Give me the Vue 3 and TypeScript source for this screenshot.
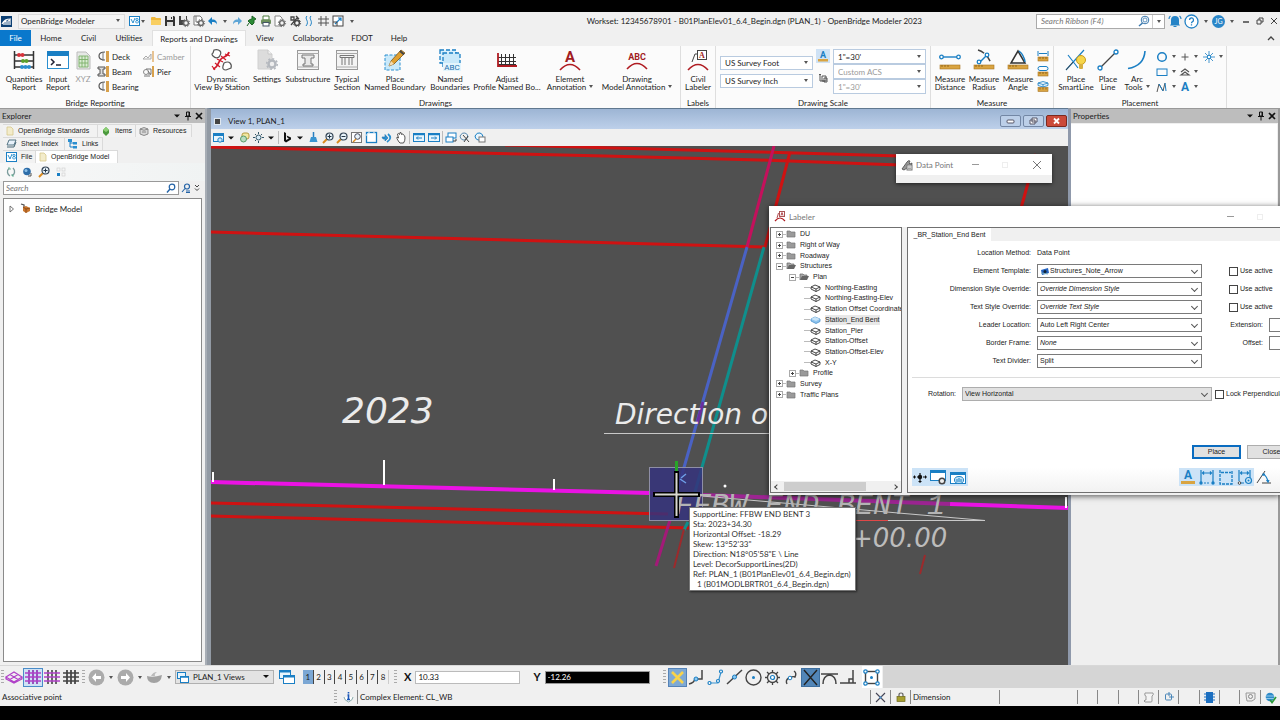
<script setup lang="ts">
import { h, ref } from 'vue'

type IconDef = [number, number, string]
const B = '#1a7fc4'
const ruler = (x: number, y: number, w: number) =>
  `<rect x="${x}" y="${y}" width="${w}" height="4" fill="#d9a441" stroke="#a87420" stroke-width=".6"/><path d="M${x + 2} ${y}v2M${x + 5} ${y}v2M${x + 8} ${y}v2" stroke="#7a5210" stroke-width=".7"/>`
const grid = (c: string, d: string) =>
  `<path d="M5 1v14M9 1v14M13 1v14" stroke="${c}" stroke-width="1.6"/><path d="M1 4h16M1 8h16M1 12h16" stroke="${d}" stroke-width="1.6"/>`
const gear = (x: number, y: number, c = '#666') =>
  `<circle cx="${x}" cy="${y}" r="2.4" fill="#f4f4f4" stroke="${c}" stroke-width="1.4"/><circle cx="${x}" cy="${y}" r="3.6" fill="none" stroke="${c}" stroke-width="1" stroke-dasharray="1.4 1.4"/>`
const lens = (s: string) =>
  `<path d="M1 11l4-4" stroke="#d98a1e" stroke-width="2"/><circle cx="7.500" cy="4.500" r="3.500" fill="#e8f3fa" stroke="#345" stroke-width="1.2"/><path d="${s}" stroke="#234" stroke-width="1"/>`

const ICONS: Record<string, IconDef> = {
  app: [11, 11, '<rect width="11" height="11" fill="#0c3f73"/><path d="M1 8c2-4 4-5 9-5M3 9V6l2-1v4M7 9V5l2-1v5" stroke="#fff" stroke-width="1.2" fill="none"/>'],
  v8: [11, 10, `<rect x=".5" y=".5" width="10" height="9" fill="#fff" stroke="${B}"/><path d="M2 3l2 4 2-5M8 4.500a1.100 1.100 0 1 0 0-2.200 1.100 1.100 0 1 0 0 2.200a1.300 1.300 0 1 0 .1 0" stroke="#2a8fd0" fill="none"/>`],
  folder: [12, 10, '<path d="M1 9V2q0-1 1-1h3l1 1h4q1 0 1 1v6z" fill="#f0b93c"/><path d="M1 9V4h10v5z" fill="#f9cf62"/>'],
  save: [12, 12, '<path d="M1 1h9l1 1v9H1z" fill="#333"/><rect x="3" y="1" width="6" height="4" fill="#e8e8e8"/><rect x="3" y="7" width="6" height="4" fill="#ddd"/><rect x="7" y="2" width="1" height="2" fill="#333"/>'],
  savegear: [12, 12, `<path d="M1 1h8v9H1z" fill="#444"/><rect x="3" y="1" width="5" height="4" fill="#e8e8e8"/>${gear(8, 8)}`],
  docgear: [12, 12, `<path d="M1 1h6l2 2v7H1z" fill="#fff" stroke="#777"/><path d="M3 1v6h4" stroke="#777" fill="none"/>${gear(8, 8)}`],
  pagegear: [12, 12, `<path d="M1 1h5l2 2v8H1z" fill="#fff" stroke="#888"/>${gear(8, 8)}`],
  undo: [11, 10, '<path d="M1 5l4-4v2.500c4 0 5 2 5 5c-1-2-2-2.500-5-2.500V9z" fill="#1a7fc4"/>'],
  redo: [11, 10, '<path d="M10 5L6 1v2.500c-4 0-5 2-5 5c1-2 2-2.500 5-2.500V9z" fill="#5ea5d6"/>'],
  pin: [11, 12, '<path d="M6 1l4 3-2 1v3L6 10 2 6l2-1.500 2-.5zM3 8l-2 3" fill="#2c8a35" stroke="#1f6426" stroke-width="1"/>'],
  print: [12, 12, '<path d="M3 1h6v4H3z" fill="#fff" stroke="#4a7a3c"/><rect x="1" y="4.500" width="10" height="4.500" rx="1" fill="#6d8f5c"/><rect x="3" y="7.500" width="6" height="3.500" fill="#fff" stroke="#456"/>'],
  tools: [12, 12, `<path d="M2 2h3v3H2zM7 1l3 3M2 10l7-8M6 6l5 0" stroke="#444" stroke-width="1.300" fill="none"/>${gear(8, 8, '#444')}`],
  waves: [10, 12, `<path d="M3 1c-3 3 3 5-1 10M7 1c-3 3 3 5-1 10" fill="none" stroke="${B}" stroke-width="1"/>`],
  hash: [11, 12, '<path d="M3 1v10M8 1v10M0 4h11M0 8h11" stroke="#555" stroke-width="1"/>'],
  scale: [12, 12, '<rect x="1" y="1" width="10" height="10" fill="#fff" stroke="#444"/><path d="M3 9l6-6M6 3h3v3" fill="none" stroke="#1a7fc4" stroke-width="1.200"/><path d="M1 7h4v4" fill="none" stroke="#444"/>'],
  bell: [14, 13, '<path d="M3 9V5a4 4 0 0 1 8 0v4l1 1.500H2z" fill="#2583c6"/><path d="M5.500 11.500h3M1 4q0-2 1.500-3M13 4q0-2-1.500-3" stroke="#2583c6" stroke-width="1.200" fill="none"/>'],
  help: [15, 15, '<circle cx="7.500" cy="7.500" r="6.500" fill="#fff" stroke="#2583c6" stroke-width="1.300"/><path d="M5.500 6a2 2 0 1 1 2.800 1.800q-.8.4-.8 1.400M7.500 10.300v1.200" stroke="#2583c6" stroke-width="1.300" fill="none"/>'],
  searchblue: [12, 12, `<circle cx="7" cy="5" r="3.800" fill="none" stroke="#3a78ad" stroke-width="1"/><circle cx="7" cy="5" r="2" fill="none" stroke="#3a78ad" stroke-width=".8"/><path d="M4.500 8L1 11" stroke="#3a78ad" stroke-width="1.500"/>`],
  search: [10, 10, `<circle cx="6" cy="4" r="2.800" fill="none" stroke="#2463a6" stroke-width="1.200"/><path d="M4 6L1 9.500" stroke="#2463a6" stroke-width="1.400"/>`],
  search2: [10, 10, `<circle cx="6" cy="3.500" r="2.500" fill="none" stroke="#2463a6" stroke-width="1.200"/><path d="M4 5.500L1 9M5 8h4M5 9.500h4" stroke="#2463a6" stroke-width="1.100"/>`],
  min: [8, 8, '<path d="M1 5h6" stroke="#444" stroke-width="1.500"/>'],
  restore: [8, 8, '<path d="M1 3h4v4H1zM3 3V1h4v4H5" fill="none" stroke="#444"/>'],
  close: [8, 8, '<path d="M1 1l6 6M7 1L1 7" stroke="#444" stroke-width="1"/>'],
  closed: [8, 8, '<path d="M0 0l8 8M8 0L0 8" stroke="#777" stroke-width="1"/>'],
  up: [8, 6, '<path d="M1 5l3-3 3 3" fill="none" stroke="#444" stroke-width="1.300"/>'],
  abacus: [22, 20, '<path d="M1.500 1v18M20.500 1v18M1 5h20M1 11h20M1 17h20" stroke="#333" stroke-width="1.500"/><g fill="#d8323a"><circle cx="6" cy="5" r="2"/><circle cx="9.500" cy="5" r="2"/></g><g fill="#5aa02c"><circle cx="10" cy="11" r="2"/><circle cx="13.500" cy="11" r="2"/></g><g fill="#2a8fd0"><circle cx="9" cy="17" r="2"/><circle cx="12.500" cy="17" r="2"/><circle cx="16" cy="17" r="2"/></g>'],
  terminal: [22, 18, '<rect x=".5" y=".5" width="21" height="17" fill="#fff" stroke="#2a8fd0"/><rect width="22" height="5" fill="#1a7fc4"/><path d="M4 8l3 3-3 3M9 14h5" fill="none" stroke="#223" stroke-width="1.500"/>'],
  xyz: [15, 19, '<path d="M1 1h9l4 4v13H1z" fill="#e6e8e6" stroke="#bbb"/><rect x="3" y="5" width="9" height="11" fill="#d9ecd2"/><path d="M3 5h9v11H3zM6 5v11M9 5v11M3 8.500h9M3 12h9" fill="none" stroke="#7cb069" stroke-width=".9"/>'],
  deck: [12, 11, '<path d="M7 1Q1 1 1 5t6 4" fill="none" stroke="#555" stroke-width="1.200"/><rect x="8" y="0" width="3" height="11" fill="#d8a14c"/><path d="M5 1v9" stroke="#777"/>'],
  beam: [12, 11, '<path d="M0 1h7v2H5v5h2v2H0V8h2V3H0z" fill="#ddd" stroke="#555" stroke-width="1"/><rect x="8" y="0" width="3" height="11" fill="#d8a14c"/>'],
  camber: [12, 11, '<path d="M0 8l3-3 2 2 3-4v5z" fill="none" stroke="#aaa"/><path d="M10 0v11" stroke="#e0b070" stroke-width="1.500"/>'],
  pier: [12, 11, '<circle cx="3" cy="6" r="2.500" fill="none" stroke="#888"/><path d="M3 3h5v5H5M1 10h6M5 5l3 4" stroke="#777" fill="none"/><path d="M10 0v11" stroke="#d8a14c" stroke-width="2"/>'],
  dynamic: [22, 22, '<path d="M3 1q4-1 6 1t-1 6q-3 2-6-1-2-2 0-3zM13 14q4-2 6 0t1 5l-5 2q-4 0-3-4z" fill="#fff" stroke="#555" stroke-width="1.200"/><path d="M2 20c5-1 5-7 8-10s7-2 8-7" fill="none" stroke="#d01a2a" stroke-width="1.700"/><path d="M1 17l3 4M4 14l5 4M6 10l6 3M10 7l5 4M14 5l5 2" stroke="#d01a2a" stroke-width="1.200"/>'],
  settings: [21, 22, `<path d="M1 1h10l4 4v15H1z" fill="#dcdcdc" stroke="#d0d0d0"/><path d="M11 1v4h4" fill="#f4f4f4" stroke="#c8c8c8"/><circle cx="15" cy="15" r="3.500" fill="#eee" stroke="#b4b8be" stroke-width="2.500"/><circle cx="15" cy="15" r="5.300" fill="none" stroke="#b4b8be" stroke-width="1.500" stroke-dasharray="2 2.100"/>`],
  substr: [22, 20, '<rect x=".5" y=".5" width="21" height="19" fill="#f4f4f4" stroke="#999"/><path d="M0 3.500h22M0 17h22" stroke="#aaa"/><path d="M5 5h12v3h-3v6h2v2H6v-2h2V8H5z" fill="#e8e8e8" stroke="#777"/>'],
  typical: [22, 20, '<rect x=".5" y=".5" width="21" height="19" fill="#f4f4f4" stroke="#999"/><path d="M0 3.500h22M0 17h22" stroke="#aaa"/><path d="M4 5.500h14v2H4zM6 8v7M9 8v7M13 8v7M16 8v7" fill="none" stroke="#777"/>'],
  place: [22, 22, '<rect x="1" y="6" width="15" height="15" fill="#c9e9fa" stroke="#2a8fd0" stroke-dasharray="3 1.500"/><path d="M5 17l2-5L17 1l4 3L10 15z" fill="#e0a030" stroke="#7a5418" stroke-width=".8"/><path d="M5 17l2-5 3 3z" fill="#f4dcb0"/><path d="M16 2l4 3.500" stroke="#444" stroke-width="2"/>'],
  named: [22, 22, '<rect x="1" y="1" width="16" height="13" fill="#d8f0fc" stroke="#1a7fc4" stroke-width="1.300" stroke-dasharray="4 2"/><rect x="4" y="4" width="17" height="14" fill="#c9e9fa" stroke="#1a7fc4" stroke-width="1.300" stroke-dasharray="4 2"/><rect x="4" y="14" width="18" height="8" fill="#e4f5fd"/><text x="13" y="21" text-anchor="middle" font-size="8" font-family="Roboto, sans-serif" fill="#1a6fae">ABC</text>'],
  adjust: [20, 14, '<path d="M4.500 1v12M8.500 1v12M12.500 1v12M16.500 1v12M1 4.500h18M1 8.500h18M1 11.500h18" stroke="#333" stroke-width="1"/><path d="M1 0v13h19" fill="none" stroke="#b01c22" stroke-width="1.800"/>'],
  annA: [22, 21, '<text x="11" y="12" text-anchor="middle" font-size="15" font-weight="700" font-family="Roboto, sans-serif" fill="#a11c22">A</text><path d="M1 20q10-11 20 0" fill="none" stroke="#b01c22" stroke-width="1.600"/>'],
  annABC: [22, 19, '<text x="11" y="9" text-anchor="middle" font-size="9" font-weight="700" font-family="Roboto, sans-serif" fill="#a11c22">ABC</text><path d="M1 18q10-11 20 0" fill="none" stroke="#b01c22" stroke-width="1.600"/>'],
  civil: [22, 21, '<path d="M1 20q10-11 20 0" fill="none" stroke="#b01c22" stroke-width="1.600"/><path d="M5 12l3-8h3" fill="none" stroke="#444"/><rect x="10.500" y=".5" width="9" height="9" fill="#fff" stroke="#444"/><text x="15" y="8" text-anchor="middle" font-size="8" font-weight="700" font-family="Liberation Serif, serif" fill="#a11c22">A</text>'],
  annscale: [14, 14, `<rect width="14" height="14" fill="#cfe2f5"/><text x="7" y="9" text-anchor="middle" font-size="9" font-weight="700" font-family="Roboto, sans-serif" fill="${B}">A</text><rect x="2" y="10" width="10" height="2.500" fill="#d9a441"/>`],
  acs: [10, 10, '<path d="M2 8V1M1 2l1-1 1 1M2 8h5M4 3h4v5H4zM6 5h3v4H6z" fill="none" stroke="#555"/>'],
  mdist: [22, 22, `<path d="M3 8h16" stroke="${B}" stroke-width="1.400"/><g fill="#fff" stroke="${B}" stroke-width="1.300"><circle cx="2.500" cy="8" r="1.800"/><circle cx="19.500" cy="8" r="1.800"/></g>${ruler(1, 16, 20)}`],
  mrad: [22, 22, `<path d="M5 1q8 2 13 13" fill="none" stroke="#444" stroke-width="1.500" stroke-dasharray="7 3"/><path d="M7 13l7-7" stroke="${B}" stroke-width="1.400"/><g fill="#fff" stroke="${B}" stroke-width="1.300"><circle cx="6" cy="13" r="1.800"/><circle cx="14" cy="6" r="1.800"/></g>${ruler(1, 16, 20)}`],
  mang: [22, 22, `<path d="M11 2L4 14h14z" fill="none" stroke="#333" stroke-width="1.500"/><path d="M12 2q5 4 6 11" fill="none" stroke="${B}" stroke-width="1.500"/>${ruler(1, 16, 20)}`],
  mlen: [12, 11, `<path d="M1 0v5M11 0v5M2 2.500h8" stroke="${B}"/>${ruler(1, 6, 10)}`],
  marea: [12, 11, `<rect x="1" y=".5" width="10" height="4" rx="2" fill="none" stroke="${B}"/>${ruler(1, 6, 10)}`],
  mvol: [12, 11, `<path d="M1 2l5-1.500L11 2v2.500L6 6 1 4.500zM1 2l5 1.500L11 2M6 3.500V6" fill="#e0f2fc" stroke="${B}" stroke-width=".8"/>${ruler(1, 6.5, 10)}`],
  smart: [22, 22, `<path d="M1 21L19 1M3 6l10 13" stroke="${B}" stroke-width="1.200"/><path d="M1 21l7-8" stroke="#444"/><circle cx="16" cy="11" r="4.500" fill="#f7d64a" stroke="#c79c1e"/><rect x="14" y="15" width="4" height="5" rx="1" fill="#d8b040"/>`],
  line: [22, 22, `<path d="M3 19L19 3" stroke="#444" stroke-width="1.300"/><g fill="#fff" stroke="${B}" stroke-width="1.300"><circle cx="3" cy="19" r="2"/><circle cx="19" cy="3" r="2"/></g>`],
  arc: [20, 20, `<path d="M1 18.500Q17 16 18 1" fill="none" stroke="${B}" stroke-width="1.600"/>`],
  circle: [12, 12, `<circle cx="6" cy="6" r="4.300" fill="none" stroke="${B}" stroke-width="1.500"/>`],
  rect: [12, 12, `<rect x="1" y="3" width="10" height="6.500" fill="none" stroke="${B}"/>`],
  poly: [12, 12, `<path d="M1 11L3 3l4 7 2-8" fill="none" stroke="#555"/><path d="M3 3l4 7M9 2l1 8" stroke="${B}"/>`],
  plus: [10, 10, '<path d="M5 1.500v7M1.500 5h7" stroke="#555"/>'],
  chev: [10, 10, '<path d="M1 5l4-3 4 3M1 8l4-3 4 3z" fill="none" stroke="#555" stroke-width="1.200"/>'],
  A: [10, 10, `<text x="5" y="9" text-anchor="middle" font-size="12" font-weight="700" font-family="Roboto, sans-serif" fill="${B}">A</text>`],
  star: [12, 12, `<path d="M6 0v12M0 6h12M2 2l8 8M10 2l-8 8" stroke="${B}" stroke-width=".8"/><circle cx="6" cy="6" r="1.800" fill="#fff" stroke="${B}"/>`],
  bridge: [8, 10, '<path d="M1 1h4l2 2v6H1z" fill="#f3eccb" stroke="#d6c88a" stroke-width=".8"/>'],
  items: [10, 11, '<path d="M5 1l3 3v3L5 10 2 7V4z" fill="#4c9a3e"/><path d="M5 1l3 3-3 2-3-2z" fill="#8ccf74"/>'],
  db: [10, 11, '<path d="M1 3q4-3 8 0v5q-4 3-8 0z" fill="#d8d8d8" stroke="#777" stroke-width=".8"/><path d="M1 3q4 2.500 8 0M3 6h4" fill="none" stroke="#777" stroke-width=".8"/>'],
  sheet: [11, 10, '<path d="M3 1h7L8 6H1z" fill="#e8f2fb" stroke="#467" stroke-width=".9"/><path d="M1 8h7l2-5" fill="none" stroke="#467"/>'],
  links: [10, 10, `<path d="M2 1v7h4M2 4h4" fill="none" stroke="${B}"/><rect x="0" y="0" width="4" height="3" fill="#2a8fd0"/><rect x="5" y="3" width="4" height="2.500" fill="#2a8fd0"/><rect x="5" y="7" width="4" height="2.500" fill="#2a8fd0"/>`],
  refresh: [10, 10, '<path d="M3 1.500Q1 3 1.500 5.500T4 9M7 1Q9 3 8.500 5.500T6 8.500" fill="none" stroke="#7b9c9c" stroke-width="1.300"/><path d="M2 1h2v2M8 9H6V7" fill="none" stroke="#5a8" stroke-width=".8"/>'],
  sphere: [10, 10, '<circle cx="5" cy="4.500" r="3.800" fill="#2e6da8"/><circle cx="4" cy="3.500" r="1.500" fill="#8cc0e8"/><path d="M6 9h3V6" stroke="#555" fill="none"/>'],
  zoomp: [12, 12, lens('M5.500 4.500h4M7.500 2.500v4')],
  zoomm: [12, 12, lens('M5.500 4.500h4')],
  dots: [10, 10, `<rect x="1" y="1" width="3" height="3" fill="none" stroke="#ccc" stroke-width=".6"/><rect x="6" y="1" width="3" height="3" fill="none" stroke="#ccc" stroke-width=".6"/><rect x="1" y="6" width="3" height="3" fill="${B}"/><rect x="6" y="6" width="3" height="3" fill="none" stroke="#ccc" stroke-width=".6"/>`],
  dchev: [8, 8, '<path d="M2 1l2 2 2-2M2 4.500l2 2 2-2" fill="none" stroke="#444"/>'],
  twist: [8, 8, '<path d="M2 1l3.500 3L2 7z" fill="#fff" stroke="#666" stroke-width=".9"/>'],
  bmodel: [11, 11, '<path d="M1 1l3 1v3" fill="none" stroke="#555" stroke-width="1.300"/><path d="M3 4l3-1 4 2v3L6 10 3 8z" fill="#c9762e"/><path d="M3 4l3 2 4-1M6 6v4" stroke="#7a3e10" stroke-width=".7" fill="none"/>'],
  pinv: [8, 10, '<path d="M2.500 1h3v4h-3zM1 5.500h6M4 6v3.500M5 1v4" fill="none" stroke="#111" stroke-width="1"/>'],
  xb: [8, 8, '<path d="M1 1l6 6M7 1L1 7" stroke="#111" stroke-width="1.700"/>'],
  tri: [8, 6, '<path d="M1 1.500h6L4 4.500z" fill="#111"/>'],
  vattr: [11, 10, `<rect x=".5" y=".5" width="10" height="8" fill="#e8f5fd" stroke="${B}"/><rect width="11" height="3" fill="${B}"/><circle cx="7" cy="7" r="2.200" fill="#cdeafa" stroke="${B}"/>`],
  style: [11, 11, '<rect x="3" y="1" width="7" height="6" rx="2" fill="#f3e7a0" stroke="#b49a40"/><circle cx="4.500" cy="7" r="3" fill="#b8dcc0" stroke="#5a9a6a"/>'],
  bright: [11, 11, '<circle cx="5.500" cy="5.500" r="2.500" fill="#d8ecf8" stroke="#356"/><path d="M5.500 0v2M5.500 9v2M0 5.500h2M9 5.500h2M2 2l1 1M9 2l-1 1M2 9l1-1" stroke="#356"/>'],
  bing: [9, 11, '<path d="M1 0l2 1v7l3-1.500-1.500-.8L3.500 3.500 8 5.500v2L3 10.500 1 9z" fill="#111"/>'],
  brush: [9, 11, '<path d="M4.500 0v5" stroke="#2a7fc0" stroke-width="1.500"/><path d="M2 5h5l1.500 5h-8z" fill="#3a94d0"/>'],
  window: [11, 11, '<rect x=".5" y=".5" width="10" height="10" fill="#fff" stroke="#777"/><circle cx="6.500" cy="4.500" r="2.800" fill="#e8f3fa" stroke="#445"/><path d="M5 7l-3 3" stroke="#d98a1e" stroke-width="1.500"/>'],
  fit: [11, 11, `<rect x=".5" y=".5" width="10" height="10" fill="#fff" stroke="${B}" stroke-width="1.300"/><path d="M0 3h1M3 0v1M8 0v1" stroke="#fff"/>`],
  rotate: [11, 10, '<path d="M1 4h3V1.500L7 5 4 8V6H2z" fill="#2a8fd0" stroke="#1a6fae" stroke-width=".6"/><path d="M7 1q5 4-1 8" fill="none" stroke="#2a8fd0" stroke-width="1.800"/>'],
  pan: [10, 12, '<path d="M3 10Q0 6 1 5l1.500 1L1.500 2q1-1.500 2 .5l.5-2q1.500-.5 1.500 2Q7 1 7.500 3 9 3 9 6T7.500 11H4z" fill="#fff" stroke="#444" stroke-width=".9"/>'],
  prev: [12, 9, `<rect x=".5" y=".5" width="11" height="8" fill="#e8f5fd" stroke="${B}"/><path d="M0 1.500h12" stroke="${B}" stroke-width="1.500"/><path d="M9 5H3.500M5 3.500L3.500 5 5 6.500" stroke="${B}" fill="none"/>`],
  next: [12, 9, `<rect x=".5" y=".5" width="11" height="8" fill="#e8f5fd" stroke="${B}"/><path d="M0 1.500h12" stroke="${B}" stroke-width="1.500"/><path d="M3 5h5.500M7 3.500L8.500 5 7 6.500" stroke="${B}" fill="none"/>`],
  copyv: [12, 11, `<rect x="3" y="1" width="8" height="5" fill="#fff" stroke="${B}"/><rect x="1" y="5" width="7" height="5" fill="#fff" stroke="${B}"/><path d="M8 9h3V7" stroke="#444" fill="none"/>`],
  clipv: [12, 11, `<path d="M1 4q2-4 5-3t3 4q-2 4-5 3t-3-4z" fill="none" stroke="#5a8ab0"/><path d="M4 3l6 7M9 4l-4 6" stroke="#444"/>`],
  maskv: [12, 11, `<path d="M1 4q2-4 5-3t3 4q-2 4-5 3t-3-4z" fill="#e8f5fd" stroke="${B}"/><rect x="5" y="5" width="6" height="5" fill="#fff" stroke="#777"/>`],
  wmin: [21, 12, '<rect x=".5" y=".5" width="20" height="11" rx="1.500" fill="#bccfe8" stroke="#7387a5"/><rect x="7" y="5" width="7" height="3" rx="1" fill="#fff" stroke="#556"/>'],
  wres: [21, 12, '<rect x=".5" y=".5" width="20" height="11" rx="1.500" fill="#bccfe8" stroke="#7387a5"/><path d="M9 3h5v4H9zM7 5h5v4H7z" fill="#fff" stroke="#556"/>'],
  wclose: [21, 12, '<rect x=".5" y=".5" width="20" height="11" rx="1.500" fill="#cb4a3a" stroke="#7c2a20"/><path d="M8 3.500l5 5M13 3.500l-5 5" stroke="#fff" stroke-width="1.800"/>'],
  wrench: [12, 12, '<path d="M1 10L6 3q1-2 3-1L8 4l1 1 2-1q0 3-2 3L3 11z" fill="#999" stroke="#555" stroke-width=".9"/><rect x="6" y="6" width="5" height="5" fill="#eee" stroke="#777"/><path d="M7 8h3M7 9.500h3" stroke="#777" stroke-width=".6"/>'],
  lab: [12, 11, '<path d="M1 10q5-6 10 0" fill="none" stroke="#b01c22" stroke-width="1.200"/><rect x="5.500" y=".5" width="5" height="5" fill="#fff" stroke="#a55"/><path d="M7 4.500l1-3 1 3M3 7l1.500-5" stroke="#a11c22" fill="none" stroke-width=".8"/>'],
  fold: [10, 8, '<path d="M1 1h3l1 1h4v5H1z" fill="#9a9a9a" stroke="#777" stroke-width=".7"/>'],
  foldo: [10, 8, '<path d="M1 7V1h3l1 1h3v1.500" fill="#aaa" stroke="#666" stroke-width=".7"/><path d="M1 7l2-4h7L8 7z" fill="#666"/>'],
  tag: [11, 8, '<path d="M1 3l4-2 5 2-4 2zM1 3v2l5 2.500V5M6 7.500l4-2V3" fill="#fff" stroke="#333" stroke-width=".9"/>'],
  tagb: [11, 8, '<path d="M1 3l4-2 5 2v2.500l-4 2-5-2.500z" fill="#8ec4ee" stroke="#4a90cc" stroke-width=".8"/><path d="M1 3l4-2 5 2-4 2z" fill="#c8e4f8"/>'],
  tmpl: [10, 9, '<path d="M1 3l7-2 1 5-7 2z" fill="#2463c0"/><circle cx="5" cy="4.500" r="1.500" fill="#123"/><path d="M1 6l7 1" stroke="#7ab" />'],
  move: [14, 12, '<path d="M1 6h12M7 2v8" stroke="#111" stroke-width="1.200" stroke-dasharray="2 1"/><circle cx="7" cy="6" r="2.200" fill="#111"/><path d="M0 6l2-2v4zM14 6l-2-2v4zM7 12L5 10h4z" fill="#111"/>'],
  wgear: [17, 15, `<rect x=".5" y=".5" width="15" height="10" fill="#fff" stroke="${B}"/><rect width="16" height="3" fill="${B}"/><circle cx="12" cy="11" r="2.800" fill="#eee" stroke="#444" stroke-width="1.500"/>`],
  wpin: [17, 15, `<rect x=".5" y="2.500" width="15" height="11" fill="#fff" stroke="${B}"/><rect y="2" width="16" height="3" fill="${B}"/><ellipse cx="9" cy="10" rx="4.500" ry="3.500" fill="#bfe3f7" stroke="${B}"/><path d="M9 8v4M7 9v3M11 9v3" stroke="${B}"/>`],
  anR: [16, 16, `<text x="8" y="10" text-anchor="middle" font-size="12" font-weight="700" font-family="Roboto, sans-serif" fill="${B}">A</text><rect x="1" y="12" width="14" height="3" fill="#d9a441"/>`],
  dimA: [16, 16, `<path d="M2 1v13M14 1v13M3 4h10M5 2.500L3.500 4 5 5.500M11 2.500L12.500 4 11 5.500" stroke="${B}" fill="none" stroke-width="1.200"/><circle cx="2" cy="14" r="1.700" fill="${B}"/><circle cx="14" cy="14" r="1.700" fill="${B}"/><path d="M5 14h6" stroke="${B}" stroke-dasharray="2 1"/>`],
  dimB: [16, 16, `<path d="M2 1v14h12V1M3 3.500h10" stroke="${B}" fill="none" stroke-width="1.300" stroke-dasharray="3 1"/>`],
  dimC: [16, 16, `<path d="M2 1v11M13 1v8M3 4h9M5 2.500L3.500 4 5 5.500M10 2.500L11.500 4 10 5.500M4 14h3" stroke="${B}" fill="none" stroke-width="1.200"/><circle cx="2.500" cy="14" r="1.300" fill="#fff" stroke="#444"/><circle cx="11.500" cy="11.500" r="3" fill="#cfe8f8" stroke="${B}" stroke-width="1.200"/><circle cx="11.500" cy="11.500" r="1" fill="${B}"/>`],
  ang: [16, 16, `<path d="M1 14L9 2M6 14h9" stroke="#444"/><path d="M7 5q4 2 5 8M10.500 11l1.500 2 1-2M9 5H7v2" stroke="${B}" fill="none" stroke-width="1.200"/>`],
  mesh: [18, 16, '<path d="M1 8l8-5 8 5-8 5zM5 5.500l8 5M5 10.500l8-5M1 8v2l8 4 8-4V8" fill="none" stroke="#b040c8" stroke-width="1.200"/>'],
  gridP: [18, 16, grid('#8a2fb0', '#b040c8')],
  gridM: [18, 16, grid('#444', '#b040c8')],
  gridK: [18, 16, grid('#333', '#444')],
  back: [17, 17, '<circle cx="8.500" cy="8.500" r="8" fill="#ababab"/><path d="M8 4L4 8.500 8 13v-3h5V7H8z" fill="#fff"/>'],
  fwd: [17, 17, '<circle cx="8.500" cy="8.500" r="8" fill="#ababab"/><path d="M9 4l4 4.500L9 13v-3H4V7h5z" fill="#fff"/>'],
  boat: [17, 13, '<path d="M1 5q6 2 15-1-1 8-8 8T1 5z" fill="#a2a2a2"/><path d="M5 5q2-4 6-4-3 2-2 4z" fill="#bbb"/>'],
  views: [12, 11, `<rect x=".5" y=".5" width="8" height="6" fill="#e8f5fd" stroke="${B}"/><rect x="3.500" y="4.500" width="8" height="6" fill="#fff" stroke="${B}"/><path d="M3 5h9" stroke="${B}" stroke-width="1.500"/>`],
  views2: [17, 15, `<rect x=".5" y=".5" width="11" height="8" fill="#e8f5fd" stroke="${B}"/><path d="M0 1.500h12" stroke="${B}" stroke-width="2"/><rect x="4.500" y="5.500" width="11" height="8" fill="#fff" stroke="${B}"/><path d="M4 6.500h12" stroke="${B}" stroke-width="2"/>`],
  snapx: [19, 19, '<rect x=".5" y=".5" width="18" height="18" fill="#7ea9d4" stroke="#5583b8"/><path d="M4 4l11 11M15 4L4 15" stroke="#f8d34a" stroke-width="2.600"/>'],
  s1: [17, 17, `<path d="M1 15q5-1 6-5h7V1" fill="none" stroke="#444" stroke-width="1.500"/><circle cx="8" cy="10" r="2" fill="#8cc8f0" stroke="${B}"/>`],
  s2: [17, 17, `<path d="M3 14h8l3-11" fill="none" stroke="#3a94d0" stroke-width="1.200"/><g fill="#fff" stroke="${B}" stroke-width="1.200"><circle cx="2.500" cy="14" r="1.500"/><circle cx="11" cy="12" r="1.500"/><circle cx="14" cy="2.500" r="1.500"/></g>`],
  s3: [17, 17, `<path d="M1 15L16 1" stroke="#444" stroke-width="1.500"/><circle cx="8.500" cy="8" r="2" fill="#8cc8f0" stroke="${B}"/>`],
  s4: [17, 17, `<circle cx="8.500" cy="8.500" r="7.500" fill="none" stroke="#444" stroke-width="1.400"/><circle cx="8.500" cy="8.500" r="1.500" fill="${B}"/>`],
  s5: [17, 17, `<circle cx="8.500" cy="8.500" r="5" fill="none" stroke="#444" stroke-width="1.300"/><path d="M8.500 1v3M8.500 13v3M1 8.500h3M13 8.500h3M3 3l2 2M14 3l-2 2M3 14l2-2M14 14l-2-2" stroke="#444" stroke-width="1.300"/><circle cx="8.500" cy="8.500" r="2" fill="#fff" stroke="${B}" stroke-width="1.200"/>`],
  s6: [17, 17, `<path d="M4 15q-2-4 2-6t6-1q2-4-1-6" fill="none" stroke="#444" stroke-width="1.400"/><circle cx="7" cy="9" r="1.800" fill="#fff" stroke="${B}"/>`],
  s7: [19, 19, '<rect x=".5" y=".5" width="18" height="18" fill="#5286b8" stroke="#3e6f9f"/><path d="M3 2l13 15M16 2L3 17" stroke="#222" stroke-width="1.400"/>'],
  s8: [17, 17, '<path d="M0 5h17M2 15q0-8 6.500-9Q15 7 15 15" fill="none" stroke="#444" stroke-width="1.500"/>'],
  s9: [17, 17, '<path d="M0 14h16M13 1v13M9 14v-4h4" fill="none" stroke="#444" stroke-width="1.500"/>'],
  s10: [17, 17, `<rect x="2.500" y="2.500" width="12" height="12" fill="none" stroke="#444" stroke-width="1.400"/><g fill="#fff" stroke="${B}" stroke-width="1.200"><circle cx="2.500" cy="2.500" r="1.700"/><circle cx="14.500" cy="2.500" r="1.700"/><circle cx="2.500" cy="14.500" r="1.700"/><circle cx="14.500" cy="14.500" r="1.700"/></g><circle cx="8.500" cy="8.500" r="1.500" fill="${B}"/>`],
  info: [11, 12, '<path d="M1 6q0 3 4.500 5Q10 9 10 6" fill="#fff" stroke="#8aa"/><path d="M5.500 1v1.500M4.500 4h1v4.500M4 8.500h3" stroke="#1a56b8" stroke-width="1.600" fill="none"/>'],
  stx: [11, 11, '<path d="M1 1l9 9M10 1L1 10" stroke="#445" stroke-width="1.100"/><circle cx="5.500" cy="5.500" r="1.300" fill="#5a94c8"/>'],
  lock: [10, 10, '<path d="M3 5V3q0-2 2-2t2 2v2" fill="none" stroke="#666" stroke-width="1.200"/><rect x="1" y="4.500" width="8" height="5" fill="#a8a030" stroke="#6e681c" stroke-width=".7"/>'],
  scroll: [12, 11, '<path d="M2 1h8q1 2-1 3v5q0 1-1 1H2q-2-1 0-2h1V4Q1 4 2 1z" fill="#f4f4f4" stroke="#999"/>'],
  boxp: [10, 10, '<rect x="1.500" y="2" width="6" height="6" rx="1" fill="none" stroke="#4a86b8"/><path d="M5 0v4M5 5h5" stroke="#4a86b8"/>'],
  chip: [11, 11, '<rect x="2" y="0" width="7" height="11" fill="#1c6fc0"/><path d="M0 2h2M0 5h2M0 8h2M9 2h2M9 5h2M9 8h2" stroke="#1c6fc0"/>'],
  shield: [11, 10, '<path d="M1 1h9v6l-3 2H2q-1-4-1-8z" fill="#eee" stroke="#999"/><circle cx="5.500" cy="4.500" r="2" fill="none" stroke="#888"/>'],
  globe: [11, 11, '<circle cx="5" cy="5" r="4.300" fill="#2e8ac8"/><path d="M1 4h8M1 6.500h8" stroke="#a8d8f4" stroke-width=".8"/><path d="M5 8l2 2.500L11 5" fill="none" stroke="#2c9a3a" stroke-width="1.700"/>'],
}
const Ic = (p: { n: string }) => {
  const [w, ht, m] = ICONS[p.n]
  return h('svg', { viewBox: `0 0 ${w} ${ht}`, width: w, height: ht, class: 'ic', 'aria-hidden': 'true', innerHTML: m })
}
Ic.props = ['n']

const tabs = [
  ['File', 'file'], ['Home', 'home'], ['Civil', 'civil'], ['Utilities', 'util'], ['Reports and Drawings', 'on'],
  ['View', 'view'], ['Collaborate', 'collab'], ['FDOT', 'fdot'], ['Help', 'help'],
]
type Big = { n: string; a: string; b?: string; off?: boolean; drop?: boolean }
const reporting: Big[] = [{ n: 'abacus', a: 'Quantities', b: 'Report' }, { n: 'terminal', a: 'Input', b: 'Report' }, { n: 'xyz', a: 'XYZ', off: true }]
const drawings: Big[] = [
  { n: 'dynamic', a: 'Dynamic', b: 'View By Station' }, { n: 'settings', a: 'Settings' }, { n: 'substr', a: 'Substructure' },
  { n: 'typical', a: 'Typical', b: 'Section' }, { n: 'place', a: 'Place', b: 'Named Boundary' }, { n: 'named', a: 'Named', b: 'Boundaries' },
  { n: 'adjust', a: 'Adjust', b: 'Profile Named Bo...' }, { n: 'annA', a: 'Element', b: 'Annotation', drop: true },
  { n: 'annABC', a: 'Drawing', b: 'Model Annotation', drop: true },
]
const measure: Big[] = [{ n: 'mdist', a: 'Measure', b: 'Distance' }, { n: 'mrad', a: 'Measure', b: 'Radius' }, { n: 'mang', a: 'Measure', b: 'Angle' }]
const placement: Big[] = [{ n: 'smart', a: 'Place', b: 'SmartLine' }, { n: 'line', a: 'Place', b: 'Line' }, { n: 'arc', a: 'Arc', b: 'Tools', drop: true }]
const mini = ['circle', 'plus', 'star', 'rect', 'chev', '', 'poly', 'A', '']

type Node = { t: string; l: number; k: 'fold' | 'foldo' | 'tag' | 'tagb'; x?: '+' | '-' }
const tree: Node[] = [
  { t: 'DU', l: 0, k: 'fold', x: '+' }, { t: 'Right of Way', l: 0, k: 'fold', x: '+' }, { t: 'Roadway', l: 0, k: 'fold', x: '+' },
  { t: 'Structures', l: 0, k: 'foldo', x: '-' }, { t: 'Plan', l: 1, k: 'foldo', x: '-' },
  { t: 'Northing-Easting', l: 2, k: 'tag' }, { t: 'Northing-Easting-Elev', l: 2, k: 'tag' }, { t: 'Station Offset Coordinates', l: 2, k: 'tag' },
  { t: 'Station_End Bent', l: 2, k: 'tagb' }, { t: 'Station_Pier', l: 2, k: 'tag' }, { t: 'Station-Offset', l: 2, k: 'tag' },
  { t: 'Station-Offset-Elev', l: 2, k: 'tag' }, { t: 'X-Y', l: 2, k: 'tag' }, { t: 'Profile', l: 1, k: 'fold', x: '+' },
  { t: 'Survey', l: 0, k: 'fold', x: '+' }, { t: 'Traffic Plans', l: 0, k: 'fold', x: '+' },
]
const fields = [
  { id: 'tpl', l: 'Element Template:', v: 'Structures_Note_Arrow', icon: true, act: true },
  { id: 'dim', l: 'Dimension Style Override:', v: 'Override Dimension Style', it: true, act: true },
  { id: 'txt', l: 'Text Style Override:', v: 'Override Text Style', it: true, act: true },
  { id: 'loc', l: 'Leader Location:', v: 'Auto Left Right Center', side: 'Extension:' },
  { id: 'frm', l: 'Border Frame:', v: 'None', it: true, side: 'Offset:' },
  { id: 'div', l: 'Text Divider:', v: 'Split' },
]
const snaps = ['snapx', 's1', 's2', 's3', 's4', 's5', 's6', 's7', 's8', 's9']
const tip = [
  'SupportLine: FFBW END BENT 3', 'Sta: 2023+34.30', 'Horizontal Offset: -18.29', 'Skew: 13°52\'33"',
  'Direction: N18°05\'58"E \\ Line', 'Level: DecorSupportLines(2D)', 'Ref: PLAN_1 (B01PlanElev01_6.4_Begin.dgn)', '\u00a0\u00a01 (B01MODLBRTR01_6.4_Begin.dgn)',
]
const status = ['', '', '', 'scroll', 'boxp', '', 'chip', '', 'shield', 'globe']
const xv = ref('10.33')
const yv = ref('-12.26')
</script>

<template>
  <div class="app">
    <header class="titlebar">
      <Ic n="app" class="appic" />
      <span class="sel flowsel"><select aria-label="Workflow"><option>OpenBridge Modeler</option></select></span>
      <button class="slot" aria-label="Design file"><Ic n="v8" /></button><i class="caret" />
      <div class="slots qa1">
        <button v-for="n in ['folder', 'save', 'savegear', 'docgear', 'undo']" :key="n" :aria-label="n"><Ic :n="n" /></button>
      </div>
      <i class="caret mid" />
      <div class="slots qa2">
        <button v-for="n in ['redo', 'pin', 'print', 'pagegear', 'tools', 'waves', 'hash', 'scale']" :key="n" :aria-label="n"><Ic :n="n" /></button>
      </div>
      <i class="caret bar" />
      <h1>Workset: 12345678901 - B01PlanElev01_6.4_Begin.dgn (PLAN_1) - OpenBridge Modeler 2023</h1>
      <div class="rsearch"><input placeholder="Search Ribbon (F4)" aria-label="Search Ribbon"><Ic n="searchblue" /><span class="dd"><i class="caret" /></span></div>
      <button class="b1" aria-label="Notifications"><Ic n="bell" /></button>
      <button class="b2" aria-label="Help"><Ic n="help" /></button><i class="caret" />
      <button class="user">JG</button><i class="caret" />
      <div class="wc"><button v-for="n in ['min', 'restore', 'close']" :key="n" :aria-label="n"><Ic :n="n" /></button></div>
    </header>

    <nav class="tabs">
      <button v-for="t in tabs" :key="t[0]" :class="['tab', t[1]]">{{ t[0] }}</button>
      <button class="collapse" aria-label="Collapse ribbon"><Ic n="up" /></button>
    </nav>

    <section class="ribbon">
      <div class="grp g-rep">
        <div class="cells">
          <button v-for="b in reporting" :key="b.n" :class="['big', { off: b.off }]"><span class="pic"><Ic :n="b.n" /></span><span>{{ b.a }}</span><span v-if="b.b">{{ b.b }}</span></button>
          <div class="smalls">
            <button><Ic n="deck" />Deck</button><button><Ic n="beam" />Beam</button><button><Ic n="deck" />Bearing</button>
          </div>
          <div class="smalls"><button class="off"><Ic n="camber" />Camber</button><button><Ic n="pier" />Pier</button></div>
        </div>
        <h2>Bridge Reporting</h2>
      </div>
      <div class="grp g-draw">
        <div class="cells">
          <button v-for="b in drawings" :key="b.n" class="big"><span class="pic"><Ic :n="b.n" /></span><span>{{ b.a }}</span><span v-if="b.b">{{ b.b }}<i v-if="b.drop" class="caret in" /></span></button>
        </div>
        <h2>Drawings</h2>
      </div>
      <div class="grp g-lab">
        <div class="cells"><button class="big"><span class="pic"><Ic n="civil" /></span><span>Civil</span><span>Labeler</span></button></div>
        <h2>Labels</h2>
      </div>
      <div class="grp g-scale">
        <div class="cells">
          <div class="units">
            <span class="sel"><select aria-label="Master units"><option>US Survey Foot</option></select></span>
            <span class="sel"><select aria-label="Sub units"><option>US Survey Inch</option></select></span>
          </div>
          <div class="sicons"><Ic n="annscale" /><Ic n="acs" /></div>
          <div class="scales">
            <span class="sel"><select aria-label="Annotation scale"><option>1"=30'</option></select></span>
            <span class="sel off"><select aria-label="ACS" disabled><option>Custom ACS</option></select></span>
            <span class="sel off"><select aria-label="ACS scale" disabled><option>1"=30'</option></select></span>
          </div>
        </div>
        <h2>Drawing Scale</h2>
      </div>
      <div class="grp g-meas">
        <div class="cells">
          <button v-for="b in measure" :key="b.n" class="big"><span class="pic"><Ic :n="b.n" /></span><span>{{ b.a }}</span><span>{{ b.b }}</span></button>
          <div class="smalls"><button v-for="n in ['mlen', 'marea', 'mvol']" :key="n" :aria-label="n"><Ic :n="n" /></button></div>
        </div>
        <h2>Measure</h2>
      </div>
      <div class="grp g-place">
        <div class="cells">
          <button v-for="b in placement" :key="b.n" class="big"><span class="pic"><Ic :n="b.n" /></span><span>{{ b.a }}</span><span>{{ b.b }}<i v-if="b.drop" class="caret in" /></span></button>
          <div class="minis"><span v-for="(n, i) in mini" :key="i"><button v-if="n" :aria-label="n"><Ic :n="n" /><i class="caret" /></button></span></div>
        </div>
        <h2>Placement</h2>
      </div>
    </section>

    <main class="work">
      <aside class="explorer">
        <div class="phead"><span>Explorer</span><button aria-label="Menu"><Ic n="tri" /></button><button aria-label="Pin"><Ic n="pinv" /></button><button aria-label="Close"><Ic n="xb" /></button></div>
        <div class="etabs">
          <div class="row"><button class="w1"><Ic n="bridge" />OpenBridge Standards</button><button class="w2"><Ic n="items" />Items</button><button class="w3"><Ic n="db" />Resources</button></div>
          <div class="row"><button class="w4"><Ic n="sheet" />Sheet Index</button><button class="w5"><Ic n="links" />Links</button></div>
          <div class="row"><button class="w6"><Ic n="v8" />File</button><button class="w7 on"><Ic n="bridge" />OpenBridge Model</button></div>
        </div>
        <div class="etool"><button v-for="n in ['refresh', 'sphere', 'zoomp', 'dots']" :key="n" :aria-label="n"><Ic :n="n" /></button></div>
        <div class="esearch"><div><input placeholder="Search" aria-label="Search"><Ic n="search" /></div><Ic n="search2" /><Ic n="dchev" /></div>
        <div class="etree"><button><Ic n="twist" /><Ic n="bmodel" />Bridge Model</button></div>
      </aside>

      <section class="vw">
        <div class="vtitle"><i class="sq" /><span>View 1, PLAN_1</span><button v-for="n in ['wmin', 'wres', 'wclose']" :key="n" :aria-label="n"><Ic :n="n" /></button></div>
        <div class="vtool">
          <button class="s14" aria-label="View attributes"><Ic n="vattr" /></button><button class="s12" aria-label="More"><Ic n="tri" /></button>
          <button class="s14" aria-label="Display style"><Ic n="style" /></button><button class="s14" aria-label="Brightness"><Ic n="bright" /></button><button class="s12" aria-label="More"><Ic n="tri" /></button>
          <i class="sep" />
          <button class="s14" aria-label="Maps"><Ic n="bing" /></button><button class="s12" aria-label="More"><Ic n="tri" /></button>
          <div class="slots v7"><button v-for="n in ['brush', 'zoomp', 'zoomm', 'window', 'fit', 'rotate', 'pan']" :key="n" :aria-label="n"><Ic :n="n" /></button></div>
          <i class="sep" />
          <div class="slots v2"><button v-for="n in ['prev', 'next']" :key="n" :aria-label="n"><Ic :n="n" /></button></div>
          <i class="sep" />
          <div class="slots v3"><button v-for="n in ['copyv', 'clipv', 'maskv']" :key="n" :aria-label="n"><Ic :n="n" /></button></div>
        </div>
        <svg class="canvas" role="img" aria-label="Plan view">
          <g transform="translate(-211 -146)" fill="none">
            <g stroke="#cf1212" stroke-width="3">
              <path d="M505 145L760 152 900 156M211 147L605 156 760 160 900 165M211 232L766 247M790 152L765 247M1036 154L1020 212M211 503L668 514M211 516L690 528" />
            </g>
            <path d="M774 146L747 247" stroke="#c4105c" stroke-width="3" />
            <path d="M747 247L677 492" stroke="#4a62c4" stroke-width="3" />
            <path d="M703 402L697 424" stroke="#6a2fa0" stroke-width="3" />
            <path d="M764 247L695 492M688 522L684 530" stroke="#0f8f8c" stroke-width="3" />
            <path d="M670 520L656 566" stroke="#a31a78" stroke-width="3" />
            <path d="M684 529L674 568M925 555L920 574" stroke="#9c2a2c" stroke-width="2" />
            <path d="M211 482L650 493M950 504L1068 508" stroke="#ea12e4" stroke-width="4" />
            <path d="M650 493L950 504" stroke="#9c2592" stroke-width="4" />
            <path d="M213 472V482M384 460V485M554 479V490M1066 497V508" stroke="#fff" stroke-width="2" />
            <g stroke="#c8c8c8"><path d="M604 433.500H790M702 496L985 520.500H850" /></g>
            <path d="M848 520.500H888" stroke="#e04848" />
            <g font-family="'DejaVu Sans', sans-serif" font-style="italic" font-weight="200" fill="#ebebeb">
              <text x="342" y="423" font-size="36">2023</text>
              <text x="615" y="424" font-size="28">Direction of</text>
              <text x="851" y="547" font-size="26" fill="#bcbcbc">+00.00</text>
            </g>
            <rect x="649.500" y="467.500" width="53" height="53" fill="#35337c" fill-opacity=".85" stroke="#8e8ea6" />
            <text x="675" y="514" font-size="30" font-style="italic" font-family="'Liberation Mono', monospace" fill="#b4b4b4">FFBW END BENT 1</text>
            <path d="M681 478L686 474M680 479L686 483" stroke="#6fa0e8" stroke-width="1.500" />
            <path d="M676.500 461V471" stroke="#28a428" stroke-width="3" />
            <path d="M676.500 471V518M653 494.500H700" stroke="#000" stroke-width="5" />
            <path d="M676.500 473V516M655 494.500H698" stroke="#d8d8d0" stroke-width="2" />
            <circle cx="725" cy="486" r="1.500" fill="#fff" />
          </g>
        </svg>
      </section>

      <aside class="props">
        <div class="phead"><span>Properties</span><button aria-label="Menu"><Ic n="tri" /></button><button aria-label="Pin"><Ic n="pinv" /></button><button aria-label="Close"><Ic n="xb" /></button></div>
        <div class="pbody" />
      </aside>

      <div class="tooltip"><div v-for="t in tip" :key="t">{{ t }}</div></div>

      <section class="dpoint">
        <div class="dt"><Ic n="wrench" /><span>Data Point</span><i class="m" /><i class="q" /><button aria-label="Close"><Ic n="closed" /></button></div>
      </section>

      <section class="labeler">
        <div class="lt"><Ic n="lab" /><span>Labeler</span><i class="m" /><i class="q" /></div>
        <div class="lb">
          <div class="ltree">
            <ul>
              <li v-for="n in tree" :key="n.t" :class="['l' + n.l]"><i v-if="n.x" :class="['box', { plus: n.x === '+' }]" /><i class="dash" /><Ic :n="n.k" /><span :class="{ cur: n.k === 'tagb' }">{{ n.t }}</span></li>
            </ul>
            <div class="sb"><i class="al" /><i class="th" /><i class="ar" /></div>
          </div>
          <form class="lform" @submit.prevent>
            <div class="ftabs"><button type="button">_BR_Station_End Bent</button></div>
            <div class="fr"><span class="lbl">Location Method:</span><span class="plain">Data Point</span></div>
            <div v-for="f in fields" :key="f.id" class="fr">
              <label class="lbl" :for="f.id">{{ f.l }}</label>
              <span :class="['combo', { it: f.it }]"><Ic v-if="f.icon" n="tmpl" /><select :id="f.id"><option>{{ f.v }}</option></select></span>
              <label v-if="f.act" class="chk"><input type="checkbox">Use active</label>
              <label v-if="f.side" class="side"><span>{{ f.side }}</span><input></label>
            </div>
            <hr>
            <div class="rot"><label for="rot">Rotation:</label><span class="combo grey"><select id="rot"><option>View Horizontal</option></select></span><label class="chk"><input type="checkbox">Lock Perpendicular</label></div>
            <div class="acts"><button class="pri">Place</button><button>Close</button></div>
            <div class="lbar">
              <div class="hl"><Ic n="move" /><Ic n="wgear" /><Ic n="wpin" /></div>
              <div class="hl r"><Ic n="anR" /><Ic n="dimA" /><Ic n="dimB" /><Ic n="dimC" /></div><Ic n="ang" class="angi" />
            </div>
          </form>
        </div>
      </section>
    </main>

    <section class="bottom">
      <i class="grip" />
      <div class="slots grids"><button v-for="(n, i) in ['mesh', 'gridP', 'gridM', 'gridK']" :key="n" :class="{ on: i === 1 }" :aria-label="n"><Ic :n="n" /></button></div>
      <i class="grip" />
      <div class="slots nav"><button aria-label="Back"><Ic n="back" /><i class="caret" /></button><button aria-label="Forward"><Ic n="fwd" /><i class="caret" /></button><button aria-label="Navigate"><Ic n="boat" /><i class="caret" /></button></div>
      <span class="sel vsel"><Ic n="views" /><select aria-label="View group"><option>PLAN_1 Views</option></select></span>
      <button class="vg" aria-label="Manage views"><Ic n="views2" /></button>
      <div class="slots nums"><button v-for="i in 8" :key="i" :class="{ on: i === 1 }">{{ i }}</button></div>
      <i class="grip" />
      <label class="xy">X<input v-model="xv"></label>
      <label class="xy y">Y<input v-model="yv"></label>
      <i class="grip g3" />
      <div class="slots snaps"><button v-for="n in snaps" :key="n" :aria-label="n"><Ic :n="n" /></button></div>
      <button class="last" aria-label="Multi snap"><Ic n="s10" /></button>
      <div class="fill" />
    </section>

    <footer class="status">
      <span class="msg">Associative point</span><i class="grip" /><Ic n="info" class="inf" /><span class="cell el">Complex Element: CL_WB</span>
      <span class="cell c18"><Ic n="stx" /></span><span class="cell c18"><Ic n="lock" /></span><span class="cell dim">Dimension</span><span class="cell gap" />
      <div class="slots st"><span v-for="(n, i) in status" :key="i" class="cell"><Ic v-if="n" :n="n" /></span></div>
    </footer>
  </div>
</template>

<style>
body { margin: 0; background: #000; overflow: hidden; }
</style>

<style scoped>
* { box-sizing: border-box; }
.app { height: 100vh; padding: 12px 0 14px; background: #000; display: flex; flex-direction: column; font: 8px/10px Lato, 'Open Sans', sans-serif; color: #1c1c1c; overflow: hidden; }
button { font: inherit; color: inherit; border: 0; background: none; padding: 0; margin: 0; display: flex; align-items: center; justify-content: center; white-space: nowrap; }
input, select { font: inherit; color: inherit; margin: 0; border-radius: 0; min-width: 0; outline: 0; }
h1, h2 { font: inherit; margin: 0; white-space: nowrap; }
svg { flex: none; display: block; }
.ic { overflow: visible; }
.caret { border: 2px solid transparent; border-top: 3px solid #555; border-bottom: 0; flex: none; width: 4px; height: 3px; }
.caret.in { display: inline-block; margin: 0 0 2px 3px; }
.slots { display: grid; grid-auto-flow: column; grid-auto-columns: 1fr; align-items: center; flex: none; }
.sel { position: relative; display: block; background: #fff; border: 1px solid #b9cbe0; }
.sel select { appearance: none; border: 0; background: none; width: 100%; height: 100%; padding: 0 4px; display: block; }
.sel::after { content: ''; position: absolute; right: 4px; top: 50%; margin-top: -2px; border: 2px solid transparent; border-top: 3px solid #555; border-bottom: 0; pointer-events: none; }
.off, .off select { color: #9a9a9a; opacity: 1; }

.titlebar { height: 18px; background: #f0f0f0; display: flex; align-items: center; flex: none; }
.appic { margin-left: 1px; }
.flowsel { width: 107px; height: 15px; margin: 0 2px 0 6px; border-color: #dcdcdc; background: #f4f4f4; }
.flowsel select { padding: 0 2px; }
.slot { width: 14px; }
.qa1 { width: 71px; margin-left: 4px; }
.caret.mid { margin: 0 3px; }
.qa2 { width: 115px; }
.caret.bar { margin-left: 5px; }
h1 { margin: 0 114px 0 auto; }
.rsearch { width: 129px; height: 15px; display: flex; align-items: center; background: #fff; border: 1px solid #aaa; margin-right: 2px; }
.rsearch input { border: 0; flex: 1; padding: 0 4px; height: 12px; font-style: italic; background: none; }
.rsearch .dd { width: 12px; margin-left: 2px; height: 100%; border-left: 1px solid #ccc; display: grid; place-items: center; }
.b1 { width: 16px; }
.b2 { width: 17px; margin-right: 4px; }
.user { width: 13px; height: 13px; border-radius: 50%; background: #2a86c8; color: #fff; margin: 0 5px 0 4px; font-size: 7px; }
.wc { display: flex; gap: 6px; margin: 0 2px 0 8px; }

.tabs { height: 16px; background: #f0f0f0; display: flex; flex: none; }
.tab { width: 40px; }
.tab.file { width: 31px; background: #0a78cc; color: #fff; }
.tab.civil { width: 35px; }
.tab.util { width: 46px; }
.tab.on { width: 94px; background: #fcfcfc; border: 1px solid #e0e0e0; border-bottom: 0; }
.tab.view { width: 38px; }
.tab.collab { width: 58px; }
.tab.help { width: 34px; }
.collapse { margin: 0 5px 0 auto; }

.ribbon { height: 62px; background: #fbfbfb; display: flex; flex: none; }
.grp { border-right: 1px solid #dedede; display: flex; flex-direction: column; }
.grp h2 { text-align: center; line-height: 10px; margin-top: auto; }
.cells { display: grid; height: 50px; }
.big { flex-direction: column; justify-content: flex-start; line-height: 8px; overflow: visible; min-width: 0; }
.big span { flex: none; }
.pic { height: 26px; margin-bottom: 3px; padding-top: 2px; display: grid; place-items: center; }
.smalls { display: flex; flex-direction: column; padding-top: 3px; }
.smalls button { height: 15px; gap: 2px; justify-content: flex-start; }
.g-rep { width: 191px; }
.g-rep .cells { grid-template-columns: 48px 20px 30px 45px 1fr; }
.g-draw { width: 490px; }
.g-draw .cells { grid-template-columns: 62px 28px 54px 24px 72px 38px 76px 50px 84px; }
.g-lab { width: 35px; }
.g-scale { width: 215px; }
.g-scale .cells { grid-template-columns: 93px 14px 93px; gap: 3px; padding-left: 4px; }
.units { display: grid; gap: 4px; padding-top: 10px; align-content: start; }
.units .sel { height: 14px; }
.sicons { display: grid; justify-items: center; align-content: start; gap: 10px; padding-top: 3px; }
.scales { padding-top: 3px; }
.scales .sel { height: 15px; }
.g-meas { width: 123px; }
.g-meas .cells { grid-template-columns: 38px 30px 38px 16px; }
.g-place { width: 173px; }
.g-place .cells { grid-template-columns: 44px 20px 38px 1fr; }
.minis { display: grid; grid-template-columns: 24px 23px 22px; grid-template-rows: repeat(3, 15px); padding-top: 3px; }
.minis span { display: flex; }
.minis button { gap: 4px; justify-content: space-between; width: 18px; }

.work { position: relative; flex: 1; min-height: 0; display: flex; background: #a7adb5; }
.phead { height: 14px; background: #bdbdbd; display: flex; align-items: center; padding: 0 2px; gap: 3px; flex: none; }
.phead span { flex: 1; }
.explorer { width: 205px; background: #f0f0f0; display: flex; flex-direction: column; flex: none; border-top: 1px solid #999; }
.etabs { padding: 1px 3px 0; font-size: 7px; font-family: 'Liberation Sans', sans-serif; color: #222; }
.row { display: flex; height: 13px; }
.row button { justify-content: flex-start; gap: 4px; padding-left: 3px; border: 1px solid #dadada; border-width: 1px 1px 0 0; background: #f2f2f2; }
.w1 { width: 95px; }
.w2 { width: 38px; }
.w3 { width: 56px; }
.w4 { width: 62px; }
.w5 { width: 38px; }
.w6 { width: 33px; }
.w7 { width: 82px; }
.row .on { background: #fff; }
.etool { height: 18px; background: linear-gradient(90deg, #f8f8f8, #f0f3f3); display: flex; padding-left: 6px; gap: 6px; }
.esearch { display: flex; align-items: center; gap: 2px; padding: 0 3px; height: 14px; }
.esearch div { width: 176px; height: 14px; display: flex; align-items: center; background: #fff; border: 1px solid #999; padding-right: 2px; }
.esearch input { border: 0; flex: 1; height: 11px; font-style: italic; padding: 0 2px; }
.etree { flex: 1; margin: 3px; border: 1px solid #8a8a8a; background: #fff; padding: 4px; }
.etree button { gap: 2px; }
.etree .ic { margin-right: 2px; }

.vw { flex: 1; min-width: 0; display: flex; flex-direction: column; margin-left: 2px; border-left: 4px solid #929aa4; background: #505050; border-top: 1px solid #60788f; }
.vtitle { height: 20px; background: linear-gradient(#9db5d4, #bdd0ea); display: flex; align-items: center; gap: 2px; padding: 4px 1px 0 3px; flex: none; }
.sq { width: 7px; height: 7px; background: #444; border: 1px solid #e0e8f0; margin-right: 5px; }
.vtitle span { flex: 1; }
.vtool { height: 17px; background: #f0f0f0; display: flex; align-items: center; flex: none; }
.s14 { width: 14px; }
.s12 { width: 12px; }
.sep { width: 1px; height: 13px; background: #bbb; margin: 0 1px; flex: none; }
.v7 { width: 102px; }
.v2 { width: 29px; margin-left: 1px; }
.v3 { width: 43px; }
.canvas { flex: 1; width: 100%; min-height: 0; background: #505050; }

.props { width: 212px; flex: none; border-left: 3px solid #8f99ab; border-right: 2px solid #9a9a9a; background: #efefef; border-top: 1px solid #999; }
.pbody { margin: 1px 1px 0 0; height: 280px; background: #fff; }

.tooltip { position: absolute; left: 689px; top: 399px; background: #fff; border: 1px solid #777; padding: 1px 4px 1px 3px; box-shadow: 1px 1px 2px #0008; color: #333; white-space: nowrap; }

.dpoint { position: absolute; left: 896px; top: 46px; width: 156px; height: 29px; background: #f0f0f0; box-shadow: 0 1px 4px #0009; color: #777; }
.dt { height: 21px; background: #fff; display: flex; align-items: center; padding-left: 5px; }
.dt span { margin-left: 3px; width: 56px; }
.m { width: 7px; height: 1px; background: #999; margin-right: 23px; }
.q { width: 6px; height: 6px; border: 1px solid #eee; margin-right: 25px; }

.labeler { position: absolute; left: 769px; right: 0; top: 98px; height: 289px; background: #fff; box-shadow: 0 1px 6px #000a; overflow: hidden; font-size: 7px; color: #222; display: flex; flex-direction: column; font-family: 'Liberation Sans', sans-serif; }
.lt { height: 21px; display: flex; align-items: center; padding-left: 5px; flex: none; font: 8px/10px Lato, 'Open Sans', sans-serif; color: #777; }
.lt span { margin-left: 3px; flex: 1; }
.lt .q { margin-right: 17px; }
.lb { flex: 1; min-height: 0; display: flex; gap: 5px; padding: 0 0 2px 1px; background: #f0f0f0; }
.ltree { width: 132px; flex: none; border: 1px solid #707070; background: #fff; display: flex; flex-direction: column; justify-content: space-between; overflow: hidden; }
.ltree ul { list-style: none; margin: 1px 0 0; padding: 0 0 0 5px; height: 171px; display: grid; grid-template-rows: repeat(16, 1fr); }
.ltree li { display: flex; align-items: center; white-space: nowrap; min-height: 0; }
.ltree li span { margin-left: 4px; }
.ltree .cur { background: #e8e8e8; }
.box { width: 7px; height: 7px; border: 1px solid #aaa; flex: none; background: linear-gradient(#444, #444) center / 3px 1px no-repeat; }
.box.plus { background: linear-gradient(#444, #444) center / 3px 1px no-repeat, linear-gradient(#444, #444) center / 1px 3px no-repeat; }
.dash { width: 3px; height: 1px; background: #bbb; flex: none; }
.l1 { padding-left: 13px; }
.l2 { padding-left: 28px; }
.l2 .dash { width: 6px; }
.sb { height: 11px; background: #f0f0f0; display: flex; align-items: center; padding: 0 4px; }
.al, .ar { width: 4px; height: 4px; border: solid #444; border-width: 0 0 1px 1px; transform: rotate(45deg); }
.ar { transform: rotate(225deg); margin-left: auto; }
.th { width: 82px; height: 9px; background: #cdcdcd; margin-left: 5px; }

.lform { flex: 1; min-width: 0; border: 1px solid #707070; border-right: 0; background: #fff; display: flex; flex-direction: column; overflow: hidden; white-space: nowrap; }
.ftabs { height: 13px; background: #f0f0f0; flex: none; }
.ftabs button { width: 83px; height: 13px; background: #fff; }
.fr { height: 18px; display: flex; align-items: center; flex: none; }
.ftabs + .fr { margin-top: 3px; }
.lbl { width: 123px; text-align: right; margin-right: 6px; flex: none; }
.combo { position: relative; width: 165px; height: 14px; border: 1px solid #7a7a7a; flex: none; display: flex; align-items: center; padding-left: 2px; }
.combo select { appearance: none; border: 0; background: none; flex: 1; height: 100%; padding: 0; }
.combo::after { content: ''; position: absolute; right: 4px; top: 3px; width: 4px; height: 4px; border: solid #555; border-width: 0 1px 1px 0; transform: rotate(45deg); pointer-events: none; }
.it { font-style: italic; }
.chk { display: flex; align-items: center; gap: 2px; margin-left: 27px; }
.chk input { appearance: none; width: 9px; height: 9px; border: 1px solid #444; background: #fff; }
.side { display: flex; align-items: center; margin-left: 22px; flex: none; }
.side span { width: 39px; text-align: right; margin-right: 6px; }
.side input { width: 40px; height: 14px; border: 1px solid #7a7a7a; }
hr { border: 0; border-top: 1px solid #dcdcdc; margin: 7px 0 9px 4px; width: 100%; flex: none; }
.rot { display: flex; align-items: center; padding-left: 20px; height: 14px; }
.rot > label:first-child { width: 34px; flex: none; }
.rot .grey { width: 250px; background: #e1e1e1; border-color: #adadad; }
.rot .chk { margin-left: 3px; flex: none; }
.acts { display: flex; gap: 6px; margin: 44px 0 0 284px; }
.acts button { width: 49px; height: 14px; background: #e1e1e1; border: 1px solid #adadad; flex: none; }
.acts .pri { border: 2px solid #0a6cc0; }
.lbar { margin-top: auto; height: 25px; padding: 0 0 5px 4px; display: flex; align-items: center; background: linear-gradient(#fff, #f2f2f2); }
.hl { background: #cce3f7; height: 18px; width: 56px; display: flex; align-items: center; justify-content: space-between; padding: 0 1px; }
.hl.r { width: 75px; margin-left: 211px; }
.angi { margin-left: 2px; }

.bottom { height: 23px; background: #f0f0f0; display: flex; align-items: center; flex: none; border-top: 1px solid #d8d8d8; }
.grip { width: 3px; height: 14px; background: repeating-linear-gradient(#aaa 0 1px, transparent 1px 3px); margin: 0 1px; flex: none; }
.grids { width: 75px; margin-right: 1px; }
.grids button { height: 19px; }
.grids .on { background: #cfe2f5; border: 1px solid #4a8cc8; }
.nav { width: 87px; margin-left: 2px; }
.nav button { gap: 4px; justify-content: flex-start; }
.vsel { width: 99px; height: 14px; background: #e3e3e3; border-color: #b0b0b0; display: flex; align-items: center; flex: none; padding-left: 1px; }
.vsel::after { border-width: 3px 3px 0; border-top-color: #111; }
.vg { width: 27px; }
.nums { width: 86px; margin: 0 4px 0 2px; }
.nums button { height: 14px; border-right: 1px solid #444; }
.nums .on { background: #7ba7d4; }
.nums button:last-child { border-right-color: #ccc; }
.xy { display: flex; align-items: center; gap: 4px; font-weight: 700; font-size: 11px; color: #111; margin-left: 6px; }
.xy input { width: 105px; height: 13px; border: 1px solid #bbb; background: #fff; font-weight: 400; font-size: 8px; padding: 0 2px; }
.xy.y { margin-left: 13px; }
.xy.y input { background: #000; color: #fff; border-color: #999; }
.g3 { margin-left: 13px; }
.snaps { width: 191px; margin: 0 3px 0 1px; }
.last { width: 20px; height: 22px; background: #fff; }
.fill { flex: 1; background: #d5d5d5; height: 22px; margin-left: 1px; }

.status { height: 18px; background: #f0f0f0; display: flex; align-items: center; flex: none; }
.msg { width: 333px; padding-left: 2px; flex: none; }
.inf { margin: 0 3px 0 5px; }
.cell { border-left: 1px solid #888; height: 14px; display: flex; align-items: center; justify-content: center; }
.el { flex: 1; justify-content: flex-start; padding-left: 2px; }
.c18 { width: 20px; }
.dim { width: 89px; justify-content: flex-start; padding-left: 2px; }
.gap { width: 78px; }
.st { width: 203px; }
</style>
